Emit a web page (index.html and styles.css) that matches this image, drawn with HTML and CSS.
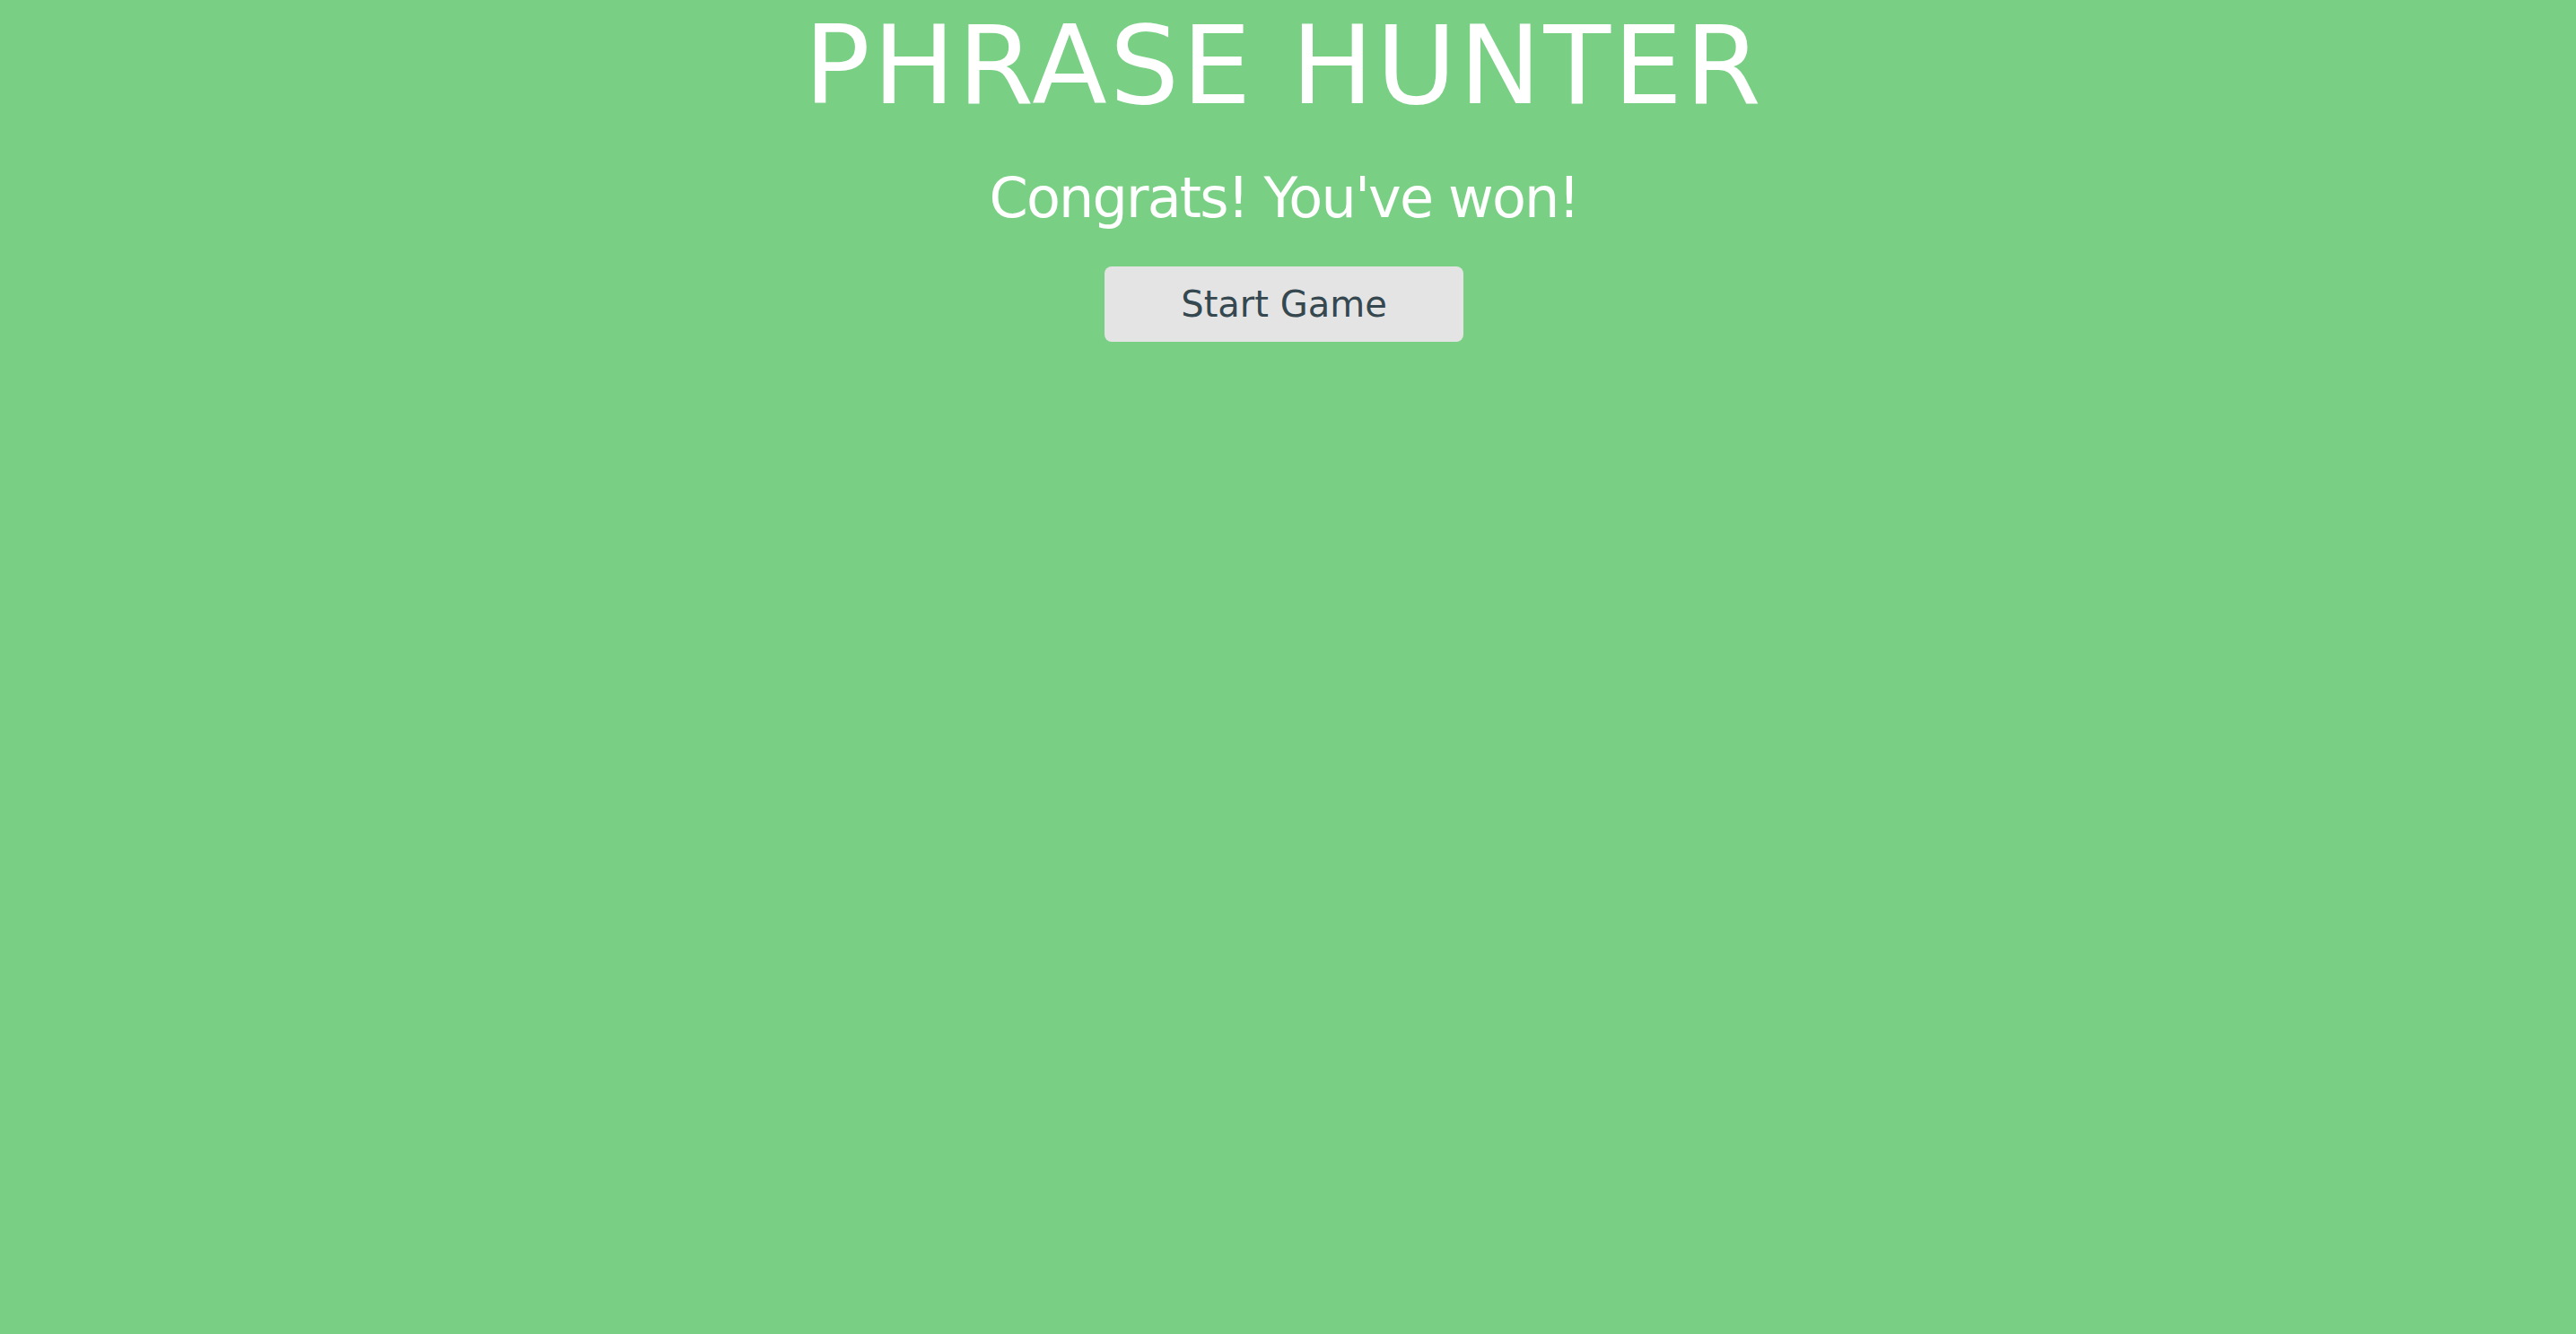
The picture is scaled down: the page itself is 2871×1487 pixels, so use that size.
FILE: index.html
```html
<!DOCTYPE html>
<html lang="en">
<head>
<meta charset="utf-8">
<title>Phrase Hunter</title>
<link rel="stylesheet" href="styles.css">
</head>
<body>
<main class="overlay">
  <h1 class="title">PHRASE HUNTER</h1>
  <h2 class="message">Congrats! You've won!</h2>
  <button class="start-btn" type="button">Start Game</button>
</main>
</body>
</html>
```
FILE: styles.css
```css
html, body {
  margin: 0;
  padding: 0;
  height: 100%;
}
body {
  background: #79d084;
  font-family: "DejaVu Sans", "Liberation Sans", sans-serif;
  color: #ffffff;
}
.overlay {
  display: flex;
  flex-direction: column;
  align-items: center;
  min-height: 100%;
  padding-right: 9px;
  box-sizing: border-box;
  background: #79d084;
}
.title {
  margin: 12px 0 0;
  font-size: 122px;
  line-height: 1;
  font-weight: 400;
  letter-spacing: 3px;
  color: #ffffff;
}
.message {
  margin: 56px 0 0;
  font-size: 62px;
  line-height: 1;
  font-weight: 400;
  letter-spacing: -1.85px;
  color: #ffffff;
}
.start-btn {
  margin-top: 45px;
  width: 400px;
  height: 84px;
  display: flex;
  align-items: center;
  justify-content: center;
  border: none;
  border-radius: 8px;
  background: #e4e4e4;
  color: #35474f;
  font-family: "DejaVu Sans", "Liberation Sans", sans-serif;
  font-size: 40px;
  line-height: 1;
  padding: 0;
  cursor: pointer;
}
```
